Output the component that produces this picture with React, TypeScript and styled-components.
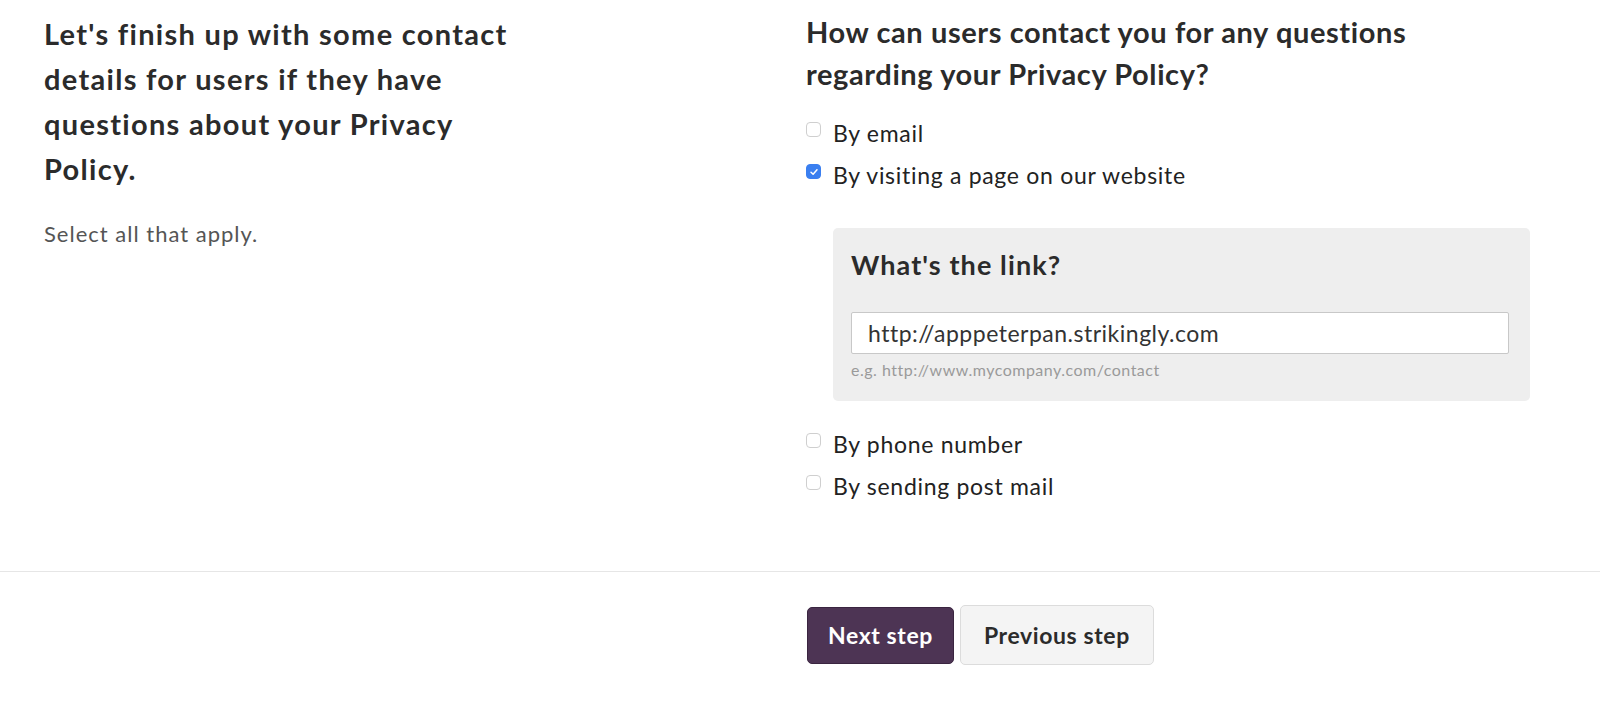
import styled, { createGlobalStyle } from "styled-components";

const GlobalStyle = createGlobalStyle`
  html, body {
    margin: 0;
    padding: 0;
    background: #ffffff;
  }
  body {
    font-family: Lato, "Liberation Sans", Arial, sans-serif;
    color: #2b2b2b;
  }
`;

type Option = {
  label: string;
  checked: boolean;
};

const topOptions: Option[] = [
  { label: "By email", checked: false },
  { label: "By visiting a page on our website", checked: true },
];

const bottomOptions: Option[] = [
  { label: "By phone number", checked: false },
  { label: "By sending post mail", checked: false },
];

function CheckRow({ label, checked }: Option) {
  return (
    <OptionRow>
      <CheckBox $checked={checked}>
        {checked && (
          <svg width="10" height="10" viewBox="0 0 10 10">
            <path
              d="M2 5.2 L4.1 7.3 L8 2.8"
              fill="none"
              stroke="#fff"
              strokeWidth="1.5"
              strokeLinecap="round"
              strokeLinejoin="round"
            />
          </svg>
        )}
      </CheckBox>
      <OptionLabel>{label}</OptionLabel>
    </OptionRow>
  );
}

export default function App(): JSX.Element {
  return (
    <Page>
      <GlobalStyle />
      <Content>
        <Intro>
          <IntroTitle>
            Let's finish up with some contact details for users if they have
            questions about your Privacy Policy.
          </IntroTitle>
          <IntroNote>Select all that apply.</IntroNote>
        </Intro>

        <Question>
          <QuestionTitle>
            How can users contact you for any questions regarding your Privacy
            Policy?
          </QuestionTitle>
          <OptionList>
            {topOptions.map((o) => (
              <CheckRow key={o.label} {...o} />
            ))}
          </OptionList>

          <LinkPanel>
            <PanelTitle>What's the link?</PanelTitle>
            <LinkInput defaultValue="http://apppeterpan.strikingly.com" />
            <Hint>e.g. http://www.mycompany.com/contact</Hint>
          </LinkPanel>

          <OptionList>
            {bottomOptions.map((o) => (
              <CheckRow key={o.label} {...o} />
            ))}
          </OptionList>
        </Question>
      </Content>

      <Footer>
        <Spacer />
        <Actions>
          <Button $variant="primary">Next step</Button>
          <Button $variant="secondary">Previous step</Button>
        </Actions>
      </Footer>
    </Page>
  );
}

const Page = styled.div`
  width: 1600px;
  min-height: 705px;
  padding-top: 11px;
  box-sizing: border-box;
`;

const Content = styled.main`
  display: grid;
  grid-template-columns: 762px 724px;
  padding-left: 44px;
  padding-bottom: 64px;
`;

const Intro = styled.section`
  max-width: 500px;
`;

const IntroTitle = styled.h2`
  margin: 0;
  font-size: 29px;
  line-height: 45px;
  letter-spacing: 1.3px;
  font-weight: 700;
  color: #2b2b2b;
`;

const IntroNote = styled.p`
  margin: 28px 0 0;
  font-size: 22px;
  line-height: 30px;
  letter-spacing: 1px;
  color: #555555;
`;

const Question = styled.section`
  display: flex;
  flex-direction: column;
`;

const QuestionTitle = styled.h2`
  margin: 0 0 17px;
  font-size: 29px;
  line-height: 42px;
  letter-spacing: 0.6px;
  font-weight: 700;
  color: #2b2b2b;
`;

const OptionList = styled.div`
  display: flex;
  flex-direction: column;
`;

const OptionRow = styled.label`
  display: flex;
  align-items: flex-start;
  gap: 12px;
  padding: 6px 0;
  cursor: pointer;
`;

const CheckBox = styled.span<{ $checked: boolean }>`
  flex: none;
  width: 15px;
  height: 15px;
  margin-top: 4px;
  box-sizing: border-box;
  border-radius: 4px;
  display: flex;
  align-items: center;
  justify-content: center;
  background: ${(p) => (p.$checked ? "#3a7ff0" : "#ffffff")};
  border: 1px solid ${(p) => (p.$checked ? "#3a7ff0" : "#cfcfcf")};
`;

const OptionLabel = styled.span`
  font-size: 23px;
  line-height: 30px;
  letter-spacing: 0.7px;
  color: #222222;
`;

const LinkPanel = styled.div`
  margin: 32px 0 22px 27px;
  padding: 20px 21px 21px 18px;
  background: #eeeeee;
  border-radius: 5px;
  display: flex;
  flex-direction: column;
`;

const PanelTitle = styled.h3`
  margin: 0 0 30px;
  font-size: 27px;
  line-height: 34px;
  letter-spacing: 1.1px;
  font-weight: 700;
  color: #2b2b2b;
`;

const LinkInput = styled.input`
  height: 42px;
  box-sizing: border-box;
  border: 1px solid #c8c8c8;
  border-radius: 2px;
  background: #ffffff;
  padding: 0 16px;
  font-family: inherit;
  font-size: 23px;
  letter-spacing: 0.5px;
  color: #333333;
  outline: none;
`;

const Hint = styled.span`
  margin-top: 6px;
  font-size: 16px;
  line-height: 20px;
  letter-spacing: 0.5px;
  color: #9a9a9a;
`;

const Footer = styled.footer`
  display: grid;
  grid-template-columns: 807px 1fr;
  border-top: 1px solid #e6e6e6;
  padding-top: 33px;
`;

const Spacer = styled.div``;

const Actions = styled.div`
  display: flex;
  align-items: center;
  gap: 6px;
`;

const Button = styled.button<{ $variant: "primary" | "secondary" }>`
  font-family: inherit;
  font-weight: 700;
  font-size: 23px;
  letter-spacing: 0.6px;
  border-radius: 5px;
  cursor: pointer;
  box-sizing: border-box;
  ${(p) =>
    p.$variant === "primary"
      ? `
    height: 57px;
    padding: 0 20px;
    background: #4d3454;
    color: #ffffff;
    border: 1px solid #3a2540;
  `
      : `
    height: 60px;
    padding: 0 23px;
    background: #f4f4f4;
    color: #2b2b2b;
    border: 1px solid #dcdcdc;
  `}
`;
